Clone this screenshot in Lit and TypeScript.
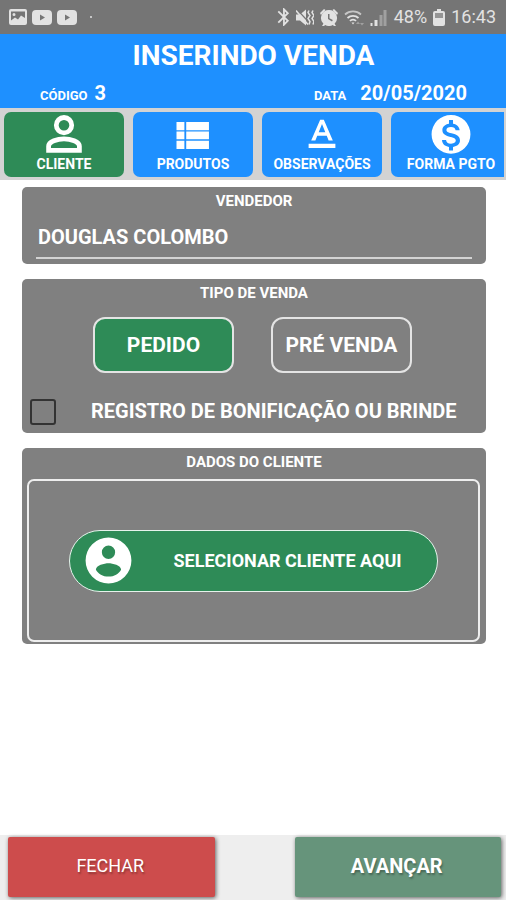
import { LitElement, html, css, svg } from "lit";
import { customElement, property, state } from "lit/decorators.js";

const icon = (body: unknown, cls: string, box = "0 0 24 24") =>
  html`<svg class="icon ${cls}" viewBox=${box} aria-hidden="true">${body}</svg>`;

const person = svg`<g fill="none" stroke="currentColor" stroke-width="2.600"><circle cx="12" cy="7.200" r="4.200"/>
  <path d="M3.600 20.900v-2.200c0-2.500 4.900-4.100 8.400-4.100s8.400 1.600 8.400 4.100v2.200z"/></g>`;
const list = svg`<path d="M3 5.400h4.300v4.500H3zM8.300 5.400h12.400v4.500H8.300zM3 10.700h4.300v4.200H3zM8.300 10.700h12.400v4.200H8.300zM3 15.700h4.300v4.500H3zM8.300 15.700h12.400v4.500H8.300z"/>`;
const textFormat = svg`<path d="M4.700 17.300v2.300h14.600v-2.300zM9.400 13h5.200l1 2.500h2.300L13 4.200h-2L6.100 15.500h2.300zM12 6.500l1.800 4.600h-3.600z"/>`;
const money = svg`<path fill-rule="evenodd" d="M12 1.600a10.600 10.600 0 1 0 0 21.200a10.600 10.600 0 1 0 0-21.200zM10.900 4.300h2.200v2.100c2.200.4 3.500 1.700 3.600 3.600h-2.200c-.2-1.200-1-1.800-2.500-1.800c-1.600 0-2.500.7-2.500 1.600c0 .9.700 1.300 2.800 1.800c2.900.7 4.600 1.700 4.600 4c0 1.900-1.400 3.100-3.800 3.500v1.900h-2.200v-1.900c-2.300-.4-3.700-1.700-3.800-3.800h2.200c.1 1.200 1 2 2.700 2c1.900 0 2.600-.9 2.600-1.700c0-1-.6-1.500-2.900-2c-2.600-.6-4.400-1.600-4.400-3.800c0-1.800 1.400-3 3.600-3.400z"/>`;
const account = svg`<path fill-rule="evenodd" d="M12 2a10 10 0 1 0 0 20a10 10 0 1 0 0-20zM12 5.500a2.900 2.900 0 1 1 0 5.800a2.900 2.900 0 1 1 0-5.800zM12 19c-2.500 0-4.500-1.200-5.500-3 0-1.900 3.700-2.800 5.500-2.800s5.500.9 5.500 2.800c-1 1.800-3 3-5.500 3z"/>`;

const picture = svg`<path fill-rule="evenodd" d="M2 0h14a2 2 0 0 1 2 2v12a2 2 0 0 1-2 2H2a2 2 0 0 1-2-2V2a2 2 0 0 1 2-2zM2 2.500v9l4-3 3 2 3-4 4 2.500V2.500zM5 4a1.500 1.500 0 1 1 0 3a1.500 1.500 0 1 1 0-3z"/>`;
const video = svg`<path fill-rule="evenodd" d="M4 0h12a4 4 0 0 1 4 4v7a4 4 0 0 1-4 4H4a4 4 0 0 1-4-4V4a4 4 0 0 1 4-4zM8 4.500v6l5-3z"/>`;
const bluetooth = svg`<path d="M17.710 7.710L12 2h-1v7.590L6.410 5 5 6.410 10.590 12 5 17.590 6.410 19 11 14.410V22h1l5.710-5.710-4.300-4.290 4.300-4.290zM13 5.830l1.880 1.880L13 9.590V5.830zm1.880 10.460L13 18.170v-3.760l1.880 1.880z"/>`;
const muted = svg`<path d="M0 5h4l6-5v16l-6-5H0z"/><path d="M1 0l13 14" stroke="#757575" stroke-width="1.200"/><path d="M0 1l12 14" stroke="currentColor" stroke-width="1.500"/><path d="M13 1l-1 2 2 3-2 3 2 3-1 3M17 1l-1 2 2 3-2 3 2 3-1 3" fill="none" stroke="currentColor" stroke-width="1.500"/>`;
const alarm = svg`<path fill-rule="evenodd" d="M9 1a8 8 0 0 1 5.600 13.700L16 17h-2l-1.200-1A8 8 0 0 1 5.200 16L4 17H2l1.400-2.300A8 8 0 0 1 9 1zM8 5v5l4 2.400.8-1.300L9.500 9.200V5z"/><path d="M0 4l4-4 1.500 1L1 6zM18 4l-4-4-1.500 1L17 6z"/>`;
const wifi = svg`<g fill="none" stroke="currentColor" stroke-width="1.800"><path d="M1 5.500a12 12 0 0 1 16 0" opacity=".75"/><path d="M3.500 9a8 8 0 0 1 11 0"/><path d="M6 12a4 4 0 0 1 6 0"/></g><path d="M7.500 13.500h3L9 15.500z"/><path d="M12 15l2-2.500 2 2.500zM16 14h4l-2 2.500z" opacity=".4"/>`;
const signal = svg`<path d="M0 14h2v3H0zM4 11h3v6H4z"/><path d="M9 6h3v11H9zM13 1h3v16h-3z" opacity=".4"/>`;
const battery = svg`<path fill-rule="evenodd" d="M4 0h4v2h2a2 2 0 0 1 2 2v11a2 2 0 0 1-2 2H2a2 2 0 0 1-2-2V4a2 2 0 0 1 2-2h2zM2 4v5h8V4z"/><path d="M2 4h8v5H2z" opacity=".3"/>`;

@customElement("status-bar")
class StatusBar extends LitElement {
  static styles = css`
    :host { display: flex; justify-content: space-between; align-items: center; height: 34px; padding: 0 10px 0 9px; background: #757575; color: #e2e2e2; }
    .group { display: flex; align-items: center; gap: 6px; }
    .group.start { gap: 5px; }
    .icon { display: block; flex: none; fill: currentColor; }
    .pic { width: 18px; height: 16px; }
    .vid { width: 20px; height: 15px; }
    .dot { width: 2px; height: 2px; margin-left: 8px; border-radius: 1px; background: currentColor; }
    .bt { width: 13px; height: 18px; }
    .std { width: 18px; height: 17px; }
    .wifi { width: 20px; height: 17px; }
    .bat { width: 12px; height: 17px; }
    .text { font-size: 18px; line-height: 24px; }
  `;
  render() {
    return html`
      <div class="group start">${icon(picture, "pic", "0 0 18 16")}${icon(video, "vid", "0 0 20 15")}${icon(video, "vid", "0 0 20 15")}<span class="dot"></span></div>
      <div class="group">
        ${icon(bluetooth, "bt", "5 2 13 20")}${icon(muted, "std", "0 0 18 16")}${icon(alarm, "std", "0 0 18 17")}${icon(wifi, "wifi", "0 0 20 17")}${icon(signal, "std", "0 0 17 17")}
        <span class="text">48%</span>${icon(battery, "bat", "0 0 12 17")}<span class="text">16:43</span>
      </div>`;
  }
}

@customElement("form-card")
class FormCard extends LitElement {
  @property() heading = "";
  static styles = css`
    :host { display: block; background: #808080; border-radius: 5px; }
    .heading { margin: 0; padding-top: 4px; font-size: 15px; line-height: 20px; font-weight: 700; text-align: center; }
  `;
  render() {
    return html`<h2 class="heading">${this.heading}</h2><slot></slot>`;
  }
}

@customElement("app-root")
class AppRoot extends LitElement {
  @state() private tab = 0;
  @state() private kind = 0;

  private tabs = [
    { label: "CLIENTE", art: person },
    { label: "PRODUTOS", art: list },
    { label: "OBSERVAÇÕES", art: textFormat },
    { label: "FORMA PGTO", art: money },
  ];
  private kinds = ["PEDIDO", "PRÉ VENDA"];

  static styles = css`
    :host { display: flex; flex-direction: column; min-height: 100vh; background: #fff; color: #fff; font-family: Roboto, sans-serif; }
    * { box-sizing: border-box; }
    button, input { font: inherit; color: inherit; margin: 0; }
    button { cursor: pointer; padding: 0; }
    .icon { display: block; flex: none; fill: currentColor; }

    .header { background: #1e90ff; height: 74px; padding: 4px 39px 0 40px; font-weight: 700; }
    .title { margin: 0; font-size: 28px; line-height: 36px; text-align: center; }
    .meta { display: flex; justify-content: space-between; line-height: 38px; }
    .pair { display: flex; align-items: baseline; gap: 7px; font-size: 20px; }
    .pair.date { gap: 14px; }
    .key { font-size: 13px; }

    .tabs { display: flex; gap: 9px; padding: 4px 0 3px 4px; background: #d3d3d3; border-right: 2px solid #d3d3d3; overflow: hidden; }
    .tab { flex: 0 0 24%; height: 65px; display: flex; flex-direction: column; align-items: center; border: 0; border-radius: 7px; background: #1e90ff; font-size: 14px; line-height: 16px; font-weight: 700; white-space: nowrap; }
    .tab.active { background: #2e8b57; }
    .tab .icon { width: 44px; height: 44px; }

    .main { flex: 1; display: flex; flex-direction: column; gap: 15px; padding: 7px 20px 20px 22px; }
    .seller { display: block; width: calc(100% - 28px); height: 36px; margin: 12px 14px 5px; padding: 0 2px 6px; border: 0; border-bottom: 2px solid #d3d3d3; border-radius: 0; background: none; font-size: 20px; font-weight: 700; outline: none; }
    .kinds { display: flex; justify-content: center; gap: 37px; padding-right: 3px; margin-top: 14px; }
    .kind { width: 141px; height: 56px; border: 2px solid #e4e4e4; border-radius: 12px; background: none; font-size: 21px; font-weight: 700; }
    .kind.active { background: #2e8b57; }
    .bonus { display: flex; align-items: center; gap: 35px; padding: 25px 8px 8px; font-size: 20px; line-height: 27px; font-weight: 700; }
    .check { appearance: none; flex: none; width: 26px; height: 26px; border: 2px solid #333; border-radius: 3px; }
    .check:checked { background: #2e8b57; }
    .frame { display: flex; justify-content: center; align-items: center; height: 163px; margin: 7px 6px 2px 5px; border: 2px solid #eee; border-radius: 7px; }
    .pick { display: flex; align-items: center; width: 82%; height: 62px; padding: 0 35px 0 11px; border: 1px solid #e6f3ec; border-radius: 31px; background: #2e8b57; font-size: 18px; font-weight: 700; }
    .pick .icon { width: 55px; height: 55px; }
    .pick-label { flex: 1; text-align: right; }

    .footer { display: grid; grid-template-columns: 1fr 1fr; gap: 80px; padding: 2px 5px 3px 8px; background: #eee; }
    .action { height: 60px; padding: 0 2px 3px 0; border: 0; border-radius: 2px; background: #cd4c4c; font-size: 18px; text-shadow: 1px 2px 2px rgba(0, 0, 0, 0.3); box-shadow: 1px 1px 4px rgba(0, 0, 0, 0.6); }
    .action.next { background: #66947b; font-size: 20px; font-weight: 700; }
  `;

  render() {
    return html`
      <status-bar></status-bar>
      <header class="header">
        <h1 class="title">INSERINDO VENDA</h1>
        <div class="meta">
          <div class="pair"><span class="key">CÓDIGO</span><span>3</span></div>
          <div class="pair date"><span class="key">DATA</span><span>20/05/2020</span></div>
        </div>
      </header>
      <nav class="tabs">
        ${this.tabs.map((t, i) => html`<button class="tab ${i === this.tab ? "active" : ""}" @click=${() => (this.tab = i)}>${icon(t.art, "")}<span>${t.label}</span></button>`)}
      </nav>
      <main class="main">
        <form-card heading="VENDEDOR">
          <input class="seller" aria-label="Vendedor" .value=${"DOUGLAS COLOMBO"} />
        </form-card>
        <form-card heading="TIPO DE VENDA">
          <div class="kinds">
            ${this.kinds.map((k, i) => html`<button class="kind ${i === this.kind ? "active" : ""}" aria-pressed=${i === this.kind} @click=${() => (this.kind = i)}>${k}</button>`)}
          </div>
          <label class="bonus"><input class="check" type="checkbox" /><span>REGISTRO DE BONIFICAÇÃO OU BRINDE</span></label>
        </form-card>
        <form-card heading="DADOS DO CLIENTE">
          <div class="frame">
            <button class="pick">${icon(account, "")}<span class="pick-label">SELECIONAR CLIENTE AQUI</span></button>
          </div>
        </form-card>
      </main>
      <footer class="footer">
        <button class="action">FECHAR</button>
        <button class="action next">AVANÇAR</button>
      </footer>`;
  }
}
